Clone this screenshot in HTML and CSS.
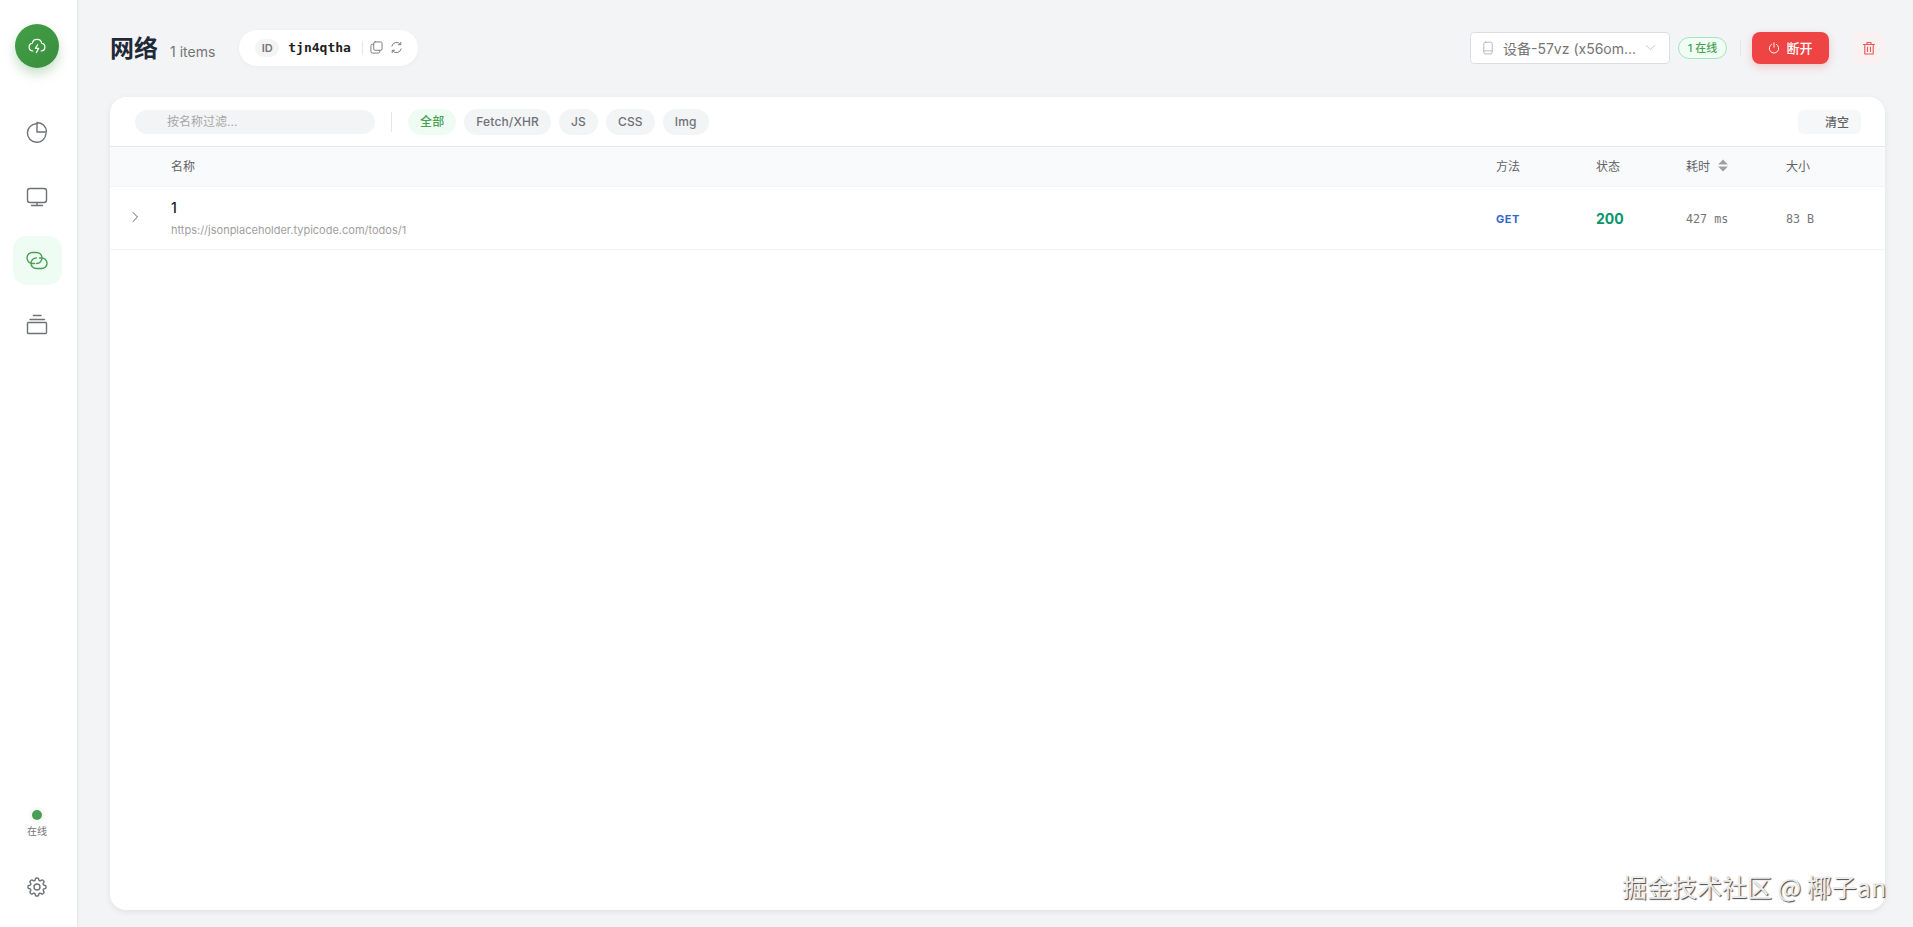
FILE: index.html
```html
<!DOCTYPE html>
<html lang="zh">
<head>
<meta charset="utf-8">
<title>网络</title>
<link rel="stylesheet" href="styles.css">
</head>
<body>
<aside class="sidebar">
  <div class="logo">
    <svg class="ic-logo" viewBox="0 0 24 24"><path d="M7 18A4.700 4.700 0 0 1 6.300 8.700 5.800 5.800 0 0 1 17.700 8.700 4.700 4.700 0 0 1 17 18"/><path d="M12.800 10.500 10 14.800h4L11.200 20"/></svg>
  </div>
  <nav class="nav">
    <a class="nav-item"><svg class="ic-nav" viewBox="0 0 24 24"><path d="M12 2.700A9.300 9.300 0 1 0 21 12.500"/><path d="M12 11V1.500A9.500 9.500 0 0 1 21.500 11z"/></svg></a>
    <a class="nav-item"><svg class="ic-nav" viewBox="0 0 24 24"><rect x="2.500" y="3.500" width="19" height="14" rx="2.500"/><path d="M12 17.500v3M6.500 20.500h11"/></svg></a>
    <a class="nav-item active"><svg class="ic-nav" viewBox="0 0 24 24"><path d="M9.500 14.500H7.500A5.500 5.500 0 0 1 7.500 3.500H11.500A5.500 5.500 0 0 1 11.500 14.500"/><path d="M14.500 9H16.750A5.250 5.250 0 0 1 16.750 19.500H11.250A5.250 5.250 0 0 1 11.250 9"/></svg></a>
    <a class="nav-item"><svg class="ic-nav" viewBox="0 0 24 24"><rect x="2.500" y="9.500" width="19" height="11" rx="1"/><path d="M5 6.500h14.500M8.500 2.500h7.500"/></svg></a>
  </nav>
  <div class="side-bottom">
    <div class="status"><span class="dot"></span><span class="status-text">在线</span></div>
    <a class="gear"><svg class="ic-nav" viewBox="0 0 24 24"><path d="M10.343 3.940c.09-.542.560-.940 1.110-.940h1.093c.550 0 1.020.398 1.110.940l.149.894c.070.424.384.764.780.930.398.164.855.142 1.205-.108l.737-.527a1.125 1.125 0 011.450.120l.773.774c.390.389.440 1.002.120 1.450l-.527.737c-.250.350-.272.806-.107 1.204.165.397.505.710.930.780l.893.150c.543.090.940.560.940 1.109v1.094c0 .550-.397 1.020-.940 1.110l-.893.149c-.425.070-.765.383-.930.780-.165.398-.143.854.107 1.204l.527.738c.320.447.269 1.060-.120 1.450l-.774.773a1.125 1.125 0 01-1.449.120l-.738-.527c-.350-.250-.806-.272-1.203-.107-.397.165-.710.505-.781.929l-.149.894c-.090.542-.560.940-1.110.940h-1.094c-.550 0-1.019-.398-1.110-.940l-.148-.894c-.071-.424-.384-.764-.781-.930-.398-.164-.854-.142-1.204.108l-.738.527c-.447.320-1.060.269-1.450-.120l-.773-.774a1.125 1.125 0 01-.120-1.450l.527-.737c.250-.350.273-.806.108-1.204-.165-.397-.505-.710-.930-.780l-.894-.150c-.542-.090-.940-.560-.940-1.109v-1.094c0-.550.398-1.020.940-1.110l.894-.149c.424-.070.765-.383.930-.780.165-.398.143-.854-.107-1.204l-.527-.738a1.125 1.125 0 01.120-1.450l.773-.773a1.125 1.125 0 011.450-.120l.737.527c.350.250.807.272 1.204.107.397-.165.710-.505.780-.929l.150-.894z"/><circle cx="12" cy="12" r="3"/></svg></a>
  </div>
</aside>
<main class="main">
  <header class="topbar">
    <h1 class="title">网络</h1>
    <span class="count">1 items</span>
    <div class="id-pill">
      <span class="id-tag">ID</span>
      <span class="id-value">tjn4qtha</span>
      <span class="id-sep"></span>
      <svg class="ic-small ic-copy" viewBox="0 0 14 14"><rect x="4" y="1" width="9" height="9" rx="1.500"/><path d="M4 3.500H2.500A1.500 1.500 0 0 0 1 5v6.500A1.500 1.500 0 0 0 2.500 13H9a1.500 1.500 0 0 0 1.500-1.500V10"/></svg>
      <svg class="ic-small" viewBox="0 0 14 14"><path d="M2 5.500A5.200 5.200 0 0 1 11.200 3.500"/><path d="M12 8.500A5.200 5.200 0 0 1 2.800 10.500"/><path d="M11.600 1.500v2.500H9.100M2.400 12.500V10h2.500"/></svg>
    </div>
    <div class="top-right">
      <div class="select">
        <svg class="ic-device" viewBox="0 0 12 16"><rect x="1" y="1" width="10" height="14" rx="2"/><path d="M1 11.500h10"/></svg>
        <span class="select-text">设备-57vz (x56om...</span>
        <svg class="ic-caret" viewBox="0 0 12 8"><path d="M1 1.500 6 6.500l5-5"/></svg>
      </div>
      <span class="online-badge">1 在线</span>
      <span class="top-sep"></span>
      <button class="btn-danger">
        <svg class="ic-power" viewBox="0 0 14 14"><path d="M4.200 2.600a5.500 5.500 0 1 0 5.600 0"/><path d="M7 1v5"/></svg>断开
      </button>
      <button class="btn-trash">
        <svg class="ic-trash" viewBox="0 0 14 14"><path d="M1.500 3.500h11M5 3.500V1.500h4v2M2.800 3.500v9.500h8.400V3.500M5.500 6v4.500M8.500 6v4.500"/></svg>
      </button>
    </div>
  </header>
  <section class="card">
    <div class="toolbar">
      <input class="filter" type="text" placeholder="按名称过滤...">
      <span class="tool-sep"></span>
      <div class="chips">
        <span class="chip on">全部</span>
        <span class="chip">Fetch/XHR</span>
        <span class="chip">JS</span>
        <span class="chip">CSS</span>
        <span class="chip">Img</span>
      </div>
      <button class="btn-clear">清空</button>
    </div>
    <div class="grid head">
      <span></span>
      <span>名称</span>
      <span>方法</span>
      <span>状态</span>
      <span class="sort">耗时<svg class="ic-sort" viewBox="0 0 10 12"><path d="M5 .500 9.500 5H.500zM5 11.500.500 7h9z"/></svg></span>
      <span>大小</span>
    </div>
    <div class="grid row">
      <svg class="ic-chevron" viewBox="0 0 8 12"><path d="M2 1.500 6.500 6 2 10.500"/></svg>
      <div class="name">
        <div class="name-main">1</div>
        <div class="name-url">https://jsonplaceholder.typicode.com/todos/1</div>
      </div>
      <span class="method">GET</span>
      <span class="code">200</span>
      <span class="mono">427 ms</span>
      <span class="mono">83 B</span>
    </div>
  </section>
</main>
<div class="watermark">掘金技术社区 @ 椰子an</div>
</body>
</html>
```
FILE: styles.css
```css
* { box-sizing: border-box; }
html, body { height: 100%; }
body {
  margin: 0;
  display: flex;
  overflow: hidden;
  background: #f3f4f6;
  color: #212121;
  font-family: Inter, "Noto Sans CJK SC", sans-serif;
}
svg { fill: none; stroke: currentColor; stroke-linecap: round; stroke-linejoin: round; flex: none; display: block; }

.sidebar {
  width: 78px;
  flex: none;
  height: 927px;
  background: #fff;
  border-right: 1px solid #e5e7eb;
  display: flex;
  flex-direction: column;
  align-items: center;
  padding: 24px 3px 0 0;
  box-shadow: 1px 0 3px rgba(0,0,0,.02);
}
.logo {
  width: 44px;
  height: 44px;
  border-radius: 50%;
  background: linear-gradient(135deg, #43a047, #388e3c);
  color: #fff;
  display: flex;
  align-items: center;
  justify-content: center;
  box-shadow: 0 6px 12px rgba(56,142,60,.28);
}
.ic-logo { width: 20px; height: 20px; stroke-width: 1.500; }
.nav { margin-top: 40px; display: flex; flex-direction: column; gap: 15px; }
.nav-item {
  width: 49px;
  height: 49px;
  border-radius: 14px;
  color: #6e7176;
  display: flex;
  align-items: center;
  justify-content: center;
}
.nav-item.active { background: #effcf3; color: #4a9f55; }
.ic-nav { width: 24px; height: 24px; stroke-width: 1.400; }
.side-bottom { margin-top: auto; display: flex; flex-direction: column; align-items: center; padding-bottom: 28px; }
.status { display: flex; flex-direction: column; align-items: center; gap: 5px; }
.dot { width: 10px; height: 10px; border-radius: 50%; background: #4a9f55; box-shadow: 0 0 0 3px rgba(74,159,85,.05); }
.status-text { font-size: 10px; line-height: 13px; color: #757575; }
.gear { margin-top: 37px; color: #6e7176; }

.main { flex: 1; min-width: 0; height: 927px; padding: 27px 28px 17px 32px; display: flex; flex-direction: column; gap: 29px; }
.topbar { height: 41px; flex: none; display: flex; align-items: center; }
.title { margin: 2px 0 0; font-size: 24px; font-weight: 700; line-height: 30px; color: #1f2937; }
.count { margin-left: 12px; margin-top: 8px; font-size: 14px; color: #757575; }
.id-pill {
  margin-left: 24px;
  height: 36px;
  width: 179px;
  background: #fff;
  border-radius: 18px;
  display: flex;
  align-items: center;
  padding-left: 16px;
  box-shadow: 0 1px 4px rgba(0,0,0,.04);
}
.id-tag {
  width: 24px;
  height: 18px;
  border-radius: 9px;
  background: #f3f4f6;
  color: #757575;
  font: 600 11px/18px Inter, sans-serif;
  text-align: center;
}
.id-value { margin-left: 9px; font: 700 13px "DejaVu Sans Mono", monospace; color: #212121; }
.id-sep { width: 1px; height: 14px; margin: 0 7px 0 11px; background: #e5e7eb; }
.ic-small { width: 13px; height: 13px; color: #757575; stroke-width: 1; }
.ic-copy { margin-right: 7px; }
.top-right { margin-left: auto; display: flex; align-items: center; }
.select {
  width: 200px;
  height: 32px;
  background: #fff;
  border: 1px solid #dcdfe6;
  border-radius: 4px;
  display: flex;
  align-items: center;
  padding: 0 13px 0 12px;
  color: #757575;
  font-size: 14px;
}
.ic-device { width: 10px; height: 14px; color: #a8abb2; stroke-width: 1; }
.select-text { margin-left: 10px; white-space: nowrap; flex: 1; overflow: hidden; }
.ic-caret { width: 11px; height: 7px; color: #c0c4cc; stroke-width: 1; }
.online-badge {
  margin-left: 8px;
  width: 49px;
  height: 22px;
  border: 1px solid #a7e3bd;
  border-radius: 11px;
  background: #f0fdf4;
  color: #4a9f55;
  font-size: 11px;
  font-weight: 500;
  line-height: 20px;
  text-align: center;
}
.top-sep { width: 1px; height: 16px; margin: 0 11px 0 13px; background: #e5e7eb; }
.btn-danger {
  width: 77px;
  height: 32px;
  border: 0;
  border-radius: 8px;
  background: #ef4444;
  color: #fff;
  font: 500 13px Inter, "Noto Sans CJK SC", sans-serif;
  display: flex;
  align-items: center;
  justify-content: center;
  gap: 6px;
  padding: 0;
  box-shadow: 0 3px 8px rgba(239,68,68,.25);
}
.ic-power { width: 12px; height: 12px; stroke-width: 1.100; }
.btn-trash {
  width: 32px;
  height: 32px;
  margin-left: 24px;
  border: 0;
  border-radius: 8px;
  background: #f9f1f2;
  color: #ef5350;
  display: flex;
  align-items: center;
  justify-content: center;
  padding: 0;
}
.ic-trash { width: 14px; height: 14px; stroke-width: 1.100; }

.card {
  flex: 1;
  min-height: 0;
  background: #fff;
  border-radius: 16px;
  box-shadow: 0 2px 6px rgba(0,0,0,.08);
  overflow: hidden;
}
.toolbar {
  height: 50px;
  border-bottom: 1px solid #e5e7eb;
  display: flex;
  align-items: center;
  padding: 0 24px 0 25px;
}
.filter {
  width: 240px;
  height: 24px;
  border: 0;
  outline: 0;
  border-radius: 12px;
  background: #f3f4f6;
  padding: 0 0 0 32px;
  font: 12px Inter, "Noto Sans CJK SC", sans-serif;
  color: #212121;
}
.filter::placeholder { color: #a8a8a8; opacity: 1; }
.tool-sep { width: 1px; height: 20px; margin: 0 16px; background: #e5e7eb; }
.chips { display: flex; gap: 8px; }
.chip {
  height: 26px;
  padding: 0 12px;
  border-radius: 13px;
  background: #f3f4f6;
  color: #6e7176;
  font-size: 12px;
  font-weight: 500;
  letter-spacing: .15px;
  line-height: 26px;
}
.chip.on { background: #effcf3; color: #4a9f55; }
.btn-clear {
  margin-left: auto;
  width: 63px;
  height: 24px;
  border: 0;
  border-radius: 6px;
  background: #f6f7f9;
  color: #616161;
  font: 500 12px Inter, "Noto Sans CJK SC", sans-serif;
  text-align: right;
  padding: 0 12px 0 0;
}
.grid {
  display: grid;
  grid-template-columns: 61px 1fr 100px 90px 100px 99px;
  align-items: center;
}
.head {
  height: 40px;
  padding-bottom: 2px;
  background: #f9fafb;
  border-bottom: 1px solid #f3f4f6;
  color: #5f6368;
  font-size: 12px;
  font-weight: 400;
}
.sort { display: flex; align-items: center; gap: 7px; }
.ic-sort { width: 12px; height: 13px; fill: #a0a0a0; stroke: none; }
.row { height: 63px; border-bottom: 1px solid #f3f4f6; }
.ic-chevron { width: 8px; height: 12px; margin: -3px 0 0 21px; color: #616161; stroke-width: 1; }
.name { padding-bottom: 1px; }
.name-main { font-size: 14px; font-weight: 500; line-height: 20px; color: #212121; }
.name-url { margin-top: 4px; font-size: 11px; line-height: 16px; color: #a0a0a0; }
.method { margin-top: 2px; font-size: 11px; font-weight: 700; letter-spacing: .5px; color: #2f66d0; }
.code { font-size: 14px; font-weight: 700; color: #059669; }
.mono { margin-top: 2px; font: 11.700px "DejaVu Sans Mono", monospace; color: #757575; }

.watermark {
  position: absolute;
  left: 1622px;
  top: 871px;
  font: 400 25px/30px "Noto Sans CJK SC", sans-serif;
  white-space: nowrap;
  color: #ececec;
  text-shadow: 1px 1px 1px #444;
}
```
